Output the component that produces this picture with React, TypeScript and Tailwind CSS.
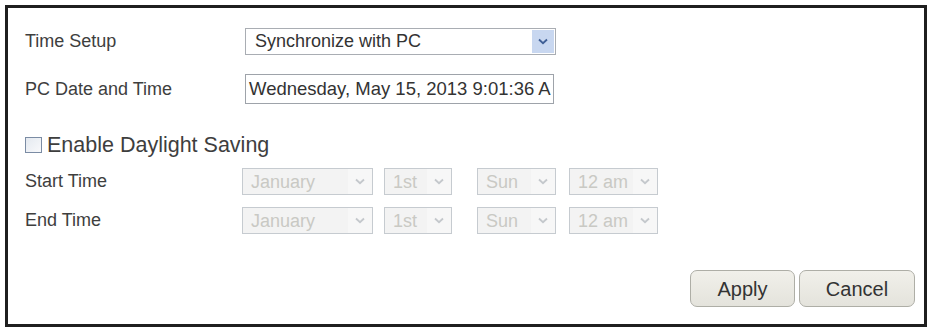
import React from 'react';

const font = { fontFamily: '"Liberation Sans", Arial, sans-serif' };

function Chevron({ className }: { className?: string }) {
  return (
    <svg width="10" height="7" viewBox="0 0 10 7" className={className}>
      <path d="M1 1.5 L5 5.2 L9 1.5" fill="none" stroke="currentColor" strokeWidth="1.8" />
    </svg>
  );
}

function DisabledSelect({ value, width }: { value: string; width: string }) {
  return (
    <div className={`${width} h-[27px] flex border border-[#c6cbd0] bg-[#f3f3f3]`}>
      <div className="flex-1 flex items-center pl-[8px] text-[18px] text-[#c9c9c4] leading-none">{value}</div>
      <div className="w-[24px] flex items-center justify-center bg-[#f7f7f7] text-[#c4c8cc]">
        <Chevron />
      </div>
    </div>
  );
}

function TimeRow({ label }: { label: string }) {
  return (
    <div className="flex items-center">
      <div className="w-[217px] text-[18px] text-[#3e3e3e]">{label}</div>
      <DisabledSelect value="January" width="w-[131px]" />
      <div className="w-[11px]" />
      <DisabledSelect value="1st" width="w-[68px]" />
      <div className="w-[25px]" />
      <DisabledSelect value="Sun" width="w-[79px]" />
      <div className="w-[13px]" />
      <DisabledSelect value="12 am" width="w-[89px]" />
    </div>
  );
}

export default function App() {
  return (
    <div className="w-[932px] h-[332px] bg-white p-[5px]" style={font}>
      <div className="h-[322px] border-[3px] border-[#1f1f1f] flex flex-col pl-[17px] pr-[9px]">
        {/* Time setup */}
        <div className="flex items-center mt-[20px]">
          <div className="w-[220px] text-[18px] text-[#3e3e3e]">Time Setup</div>
          <div className="w-[311px] h-[27px] flex border border-[#a9adb3] bg-white">
            <div className="flex-1 flex items-center pl-[9px] text-[18px] text-[#333]">Synchronize with PC</div>
            <div className="w-[22px] my-[1px] mr-[1px] flex items-center justify-center bg-[#c8d7f0] text-[#3f5f96]">
              <Chevron />
            </div>
          </div>
        </div>

        {/* PC date */}
        <div className="flex items-center mt-[19px]">
          <div className="w-[220px] text-[18px] text-[#3e3e3e]">PC Date and Time</div>
          <div className="w-[309px] h-[30px] flex items-center border border-[#9ea3aa] bg-white pl-[3px] overflow-hidden whitespace-nowrap text-[18.5px] text-[#333]">
            Wednesday, May 15, 2013 9:01:36 A
          </div>
        </div>

        {/* Daylight saving */}
        <div className="flex items-center mt-[30px] h-[22px]">
          <div className="w-[17px] h-[16px] border border-[#7b8ca4] bg-gradient-to-br from-[#e4e9f0] to-[#f8f9fb]" />
          <div className="ml-[5px] text-[21.5px] text-[#3e3e3e]">Enable Daylight Saving</div>
        </div>

        <div className="mt-[12px] flex flex-col gap-[12px]">
          <TimeRow label="Start Time" />
          <TimeRow label="End Time" />
        </div>

        {/* Buttons */}
        <div className="flex justify-end gap-[4px] mt-[36px]">
          <button className="w-[105px] h-[37px] rounded-[7px] border border-[#aeaea6] bg-gradient-to-b from-[#f1f0ea] to-[#e4e3dc] text-[20px] text-[#333]">
            Apply
          </button>
          <button className="w-[116px] h-[37px] rounded-[7px] border border-[#aeaea6] bg-gradient-to-b from-[#f1f0ea] to-[#e4e3dc] text-[20px] text-[#333]">
            Cancel
          </button>
        </div>
      </div>
    </div>
  );
}
